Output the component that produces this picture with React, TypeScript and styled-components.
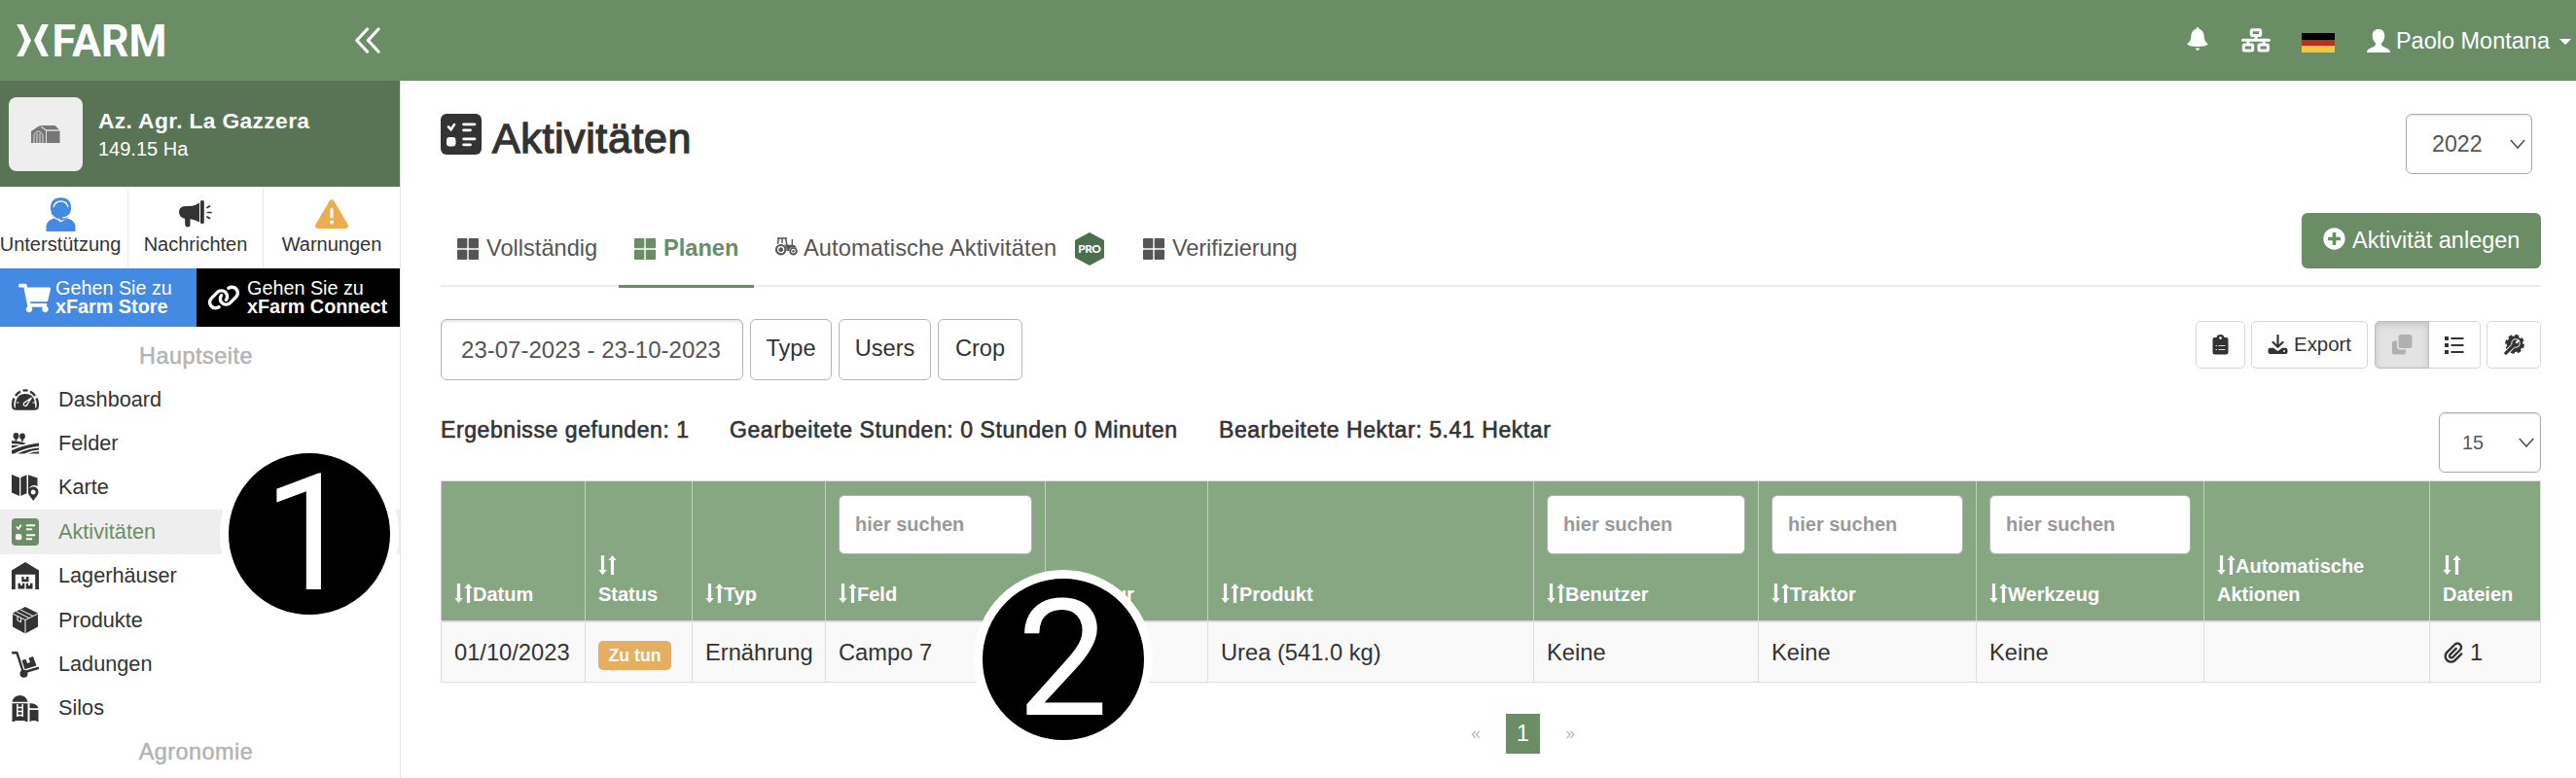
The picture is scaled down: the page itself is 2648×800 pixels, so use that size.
import React from "react";
import styled, { createGlobalStyle, css } from "styled-components";
import { FaPlusCircle, FaShoppingCart } from "react-icons/fa";
import { FaLink, FaPaperclip, FaTriangleExclamation } from "react-icons/fa6";

const green = "#6a8d66";
const ink = "#333";

const GlobalStyle = createGlobalStyle`
  *, *::before, *::after { box-sizing: border-box; }
  html, body { margin: 0; padding: 0; background: #fff; }
  body { font-family: "Liberation Sans", Arial, sans-serif; color: ${ink}; overflow: hidden; }
  svg { display: block; flex: none; }
  button, input { font-family: inherit; margin: 0; }
`;

const Page = styled.div`
  position: relative;
  display: flex;
  flex-direction: column;
  width: 2648px;
  height: 800px;
  overflow: hidden;
  background: #fff;
`;

/* ---------- top bar ---------- */

const TopBar = styled.header`
  display: flex;
  align-items: center;
  flex: none;
  height: 83px;
  padding: 0 5px 0 17px;
  background: ${green};
  color: #fff;
`;

const Collapse = styled.div`
  margin-left: 190px;
`;

const TopActions = styled.div`
  display: flex;
  align-items: center;
  margin-left: auto;
`;

const BellSlot = styled.div`margin: 0 34px 4px 0;`;
const NetSlot = styled.div`margin: 0 32px 0 0;`;

const Flag = styled.div`
  width: 34px;
  height: 20px;
  margin: 4px 33px 0 0;
  background: linear-gradient(#000 0 7px, #bb2f1c 7px 13.5px, #f2c744 13.5px);
`;

const UserName = styled.span`
  margin-left: 6px;
  font-size: 23.5px;
  line-height: 30px;
  white-space: nowrap;
`;

const Caret = styled.i`
  margin: 3px 0 0 10px;
  border: 6px solid transparent;
  border-top-color: #fff;
  border-bottom: 0;
`;

/* ---------- sidebar ---------- */

const Body = styled.div`
  display: flex;
  flex: 1;
  min-height: 0;
`;

const Sidebar = styled.aside`
  flex: none;
  width: 412px;
  border-right: 1px solid #e6e6e6;
  overflow: hidden;
`;

const Farm = styled.div`
  display: flex;
  align-items: center;
  height: 109px;
  padding-left: 9px;
  background: #587454;
  color: #fff;
`;

const Avatar = styled.div`
  display: flex;
  align-items: center;
  justify-content: center;
  width: 76px;
  height: 76px;
  margin-right: 16px;
  border-radius: 8px;
  background: #eee;
`;

const FarmName = styled.div`
  font-size: 22.8px;
  font-weight: 700;
  line-height: 31px;
  letter-spacing: 0.35px;
`;

const FarmArea = styled.div`
  font-size: 20px;
  line-height: 27px;
`;

const QuickLinks = styled.div`
  display: grid;
  grid-template-columns: 132px 139px 140px;
  height: 84px;
`;

const QuickLink = styled.div<{ $shift?: number }>`
  display: flex;
  flex-direction: column;
  align-items: center;
  border-right: 1px solid #eaeaea;
  padding-right: ${(p) => p.$shift ?? 0}px;
  &:last-child { border-right: 0; }
`;

const QuickIcon = styled.div`
  display: flex;
  align-items: center;
  justify-content: center;
  height: 36px;
  margin-top: 10px;
`;

const QuickLabel = styled.span`
  font-size: 20px;
  line-height: 26px;
  white-space: nowrap;
`;

const Promos = styled.div`
  display: flex;
  height: 60px;
`;

const Promo = styled.div<{ $bg: string; $w: number; $pad: number; $gap: number }>`
  display: flex;
  align-items: center;
  width: ${(p) => p.$w}px;
  padding-left: ${(p) => p.$pad}px;
  gap: ${(p) => p.$gap}px;
  background: ${(p) => p.$bg};
  color: #fff;
  font-size: 19.8px;
  line-height: 19.5px;
  white-space: nowrap;
  b { display: block; }
`;

const Section = styled.div<{ $top: number }>`
  height: 30px;
  margin-top: ${(p) => p.$top}px;
  padding-right: 8px;
  text-align: center;
  font-size: 23.4px;
  letter-spacing: 0.5px;
  line-height: 30px;
  color: #b3b3b3;
  -webkit-text-stroke: 0.5px #b3b3b3;
`;

const Menu = styled.nav`
  margin-top: 7px;
`;

const MenuItem = styled.div<{ $active?: boolean }>`
  display: flex;
  align-items: center;
  height: 45.4px;
  padding-left: 12px;
  gap: 20px;
  font-size: 21.7px;
  ${(p) => p.$active && css`background: #eee; color: ${green};`}
`;

/* ---------- main ---------- */

const Main = styled.main`
  flex: 1;
  min-width: 0;
  padding: 34px 36px 0 41px;
`;

const TitleRow = styled.div`
  display: flex;
  justify-content: space-between;
  height: 102px;
`;

const Title = styled.h1`
  display: flex;
  align-items: center;
  gap: 11px;
  height: 42px;
  margin: 0;
  font-size: 43px;
  font-weight: 400;
  line-height: 48px;
  letter-spacing: 0.6px;
  -webkit-text-stroke: 1.3px ${ink};
  span { padding-top: 7px; }
`;

const Select = styled.div<{ $w: number; $h: number; $size: number; $padL: number; $mr?: number }>`
  display: flex;
  align-items: center;
  justify-content: space-between;
  width: ${(p) => p.$w}px;
  height: ${(p) => p.$h}px;
  margin-right: ${(p) => p.$mr ?? 0}px;
  padding: 0 6px 0 ${(p) => p.$padL}px;
  border: 1.5px solid #aaa;
  border-radius: 6px;
  box-shadow: inset 0 1px 2px rgba(0, 0, 0, 0.1);
  font-size: ${(p) => p.$size}px;
  color: #555;
`;

const TabRow = styled.div`
  display: flex;
  justify-content: space-between;
  height: 76px;
  border-bottom: 2px solid #ececec;
`;

const Tabs = styled.div`
  display: flex;
  gap: 5px;
`;

const Tab = styled.div<{ $w: number; $active?: boolean }>`
  display: flex;
  align-items: center;
  width: ${(p) => p.$w}px;
  height: 77px;
  padding: 0 0 4px 17px;
  font-size: 23.6px;
  white-space: nowrap;
  color: #555;
  ${(p) => p.$active && css`
    padding-bottom: 1px;
    padding-left: 16px;
    border-bottom: 3px solid ${green};
    color: ${green};
    font-weight: 700;
  `}
`;

const TabLabel = styled.span<{ $gap?: number; $spread?: number }>`
  margin-left: ${(p) => p.$gap ?? 8}px;
  letter-spacing: ${(p) => p.$spread ?? 0}px;
`;

const ProSlot = styled.div`margin-left: 19px;`;
const TractorSlot = styled.div`margin-bottom: 5px;`;

const Primary = styled.button`
  display: flex;
  align-items: center;
  gap: 7px;
  width: 246px;
  height: 57px;
  padding: 0 0 0 22px;
  border: 0;
  border-radius: 6px;
  background: ${green};
  color: #fff;
  font-size: 23.5px;
  white-space: nowrap;
  svg { margin-bottom: 4px; }
`;

const ToolRow = styled.div`
  display: flex;
  justify-content: space-between;
  margin-top: 33px;
  height: 63px;
`;

const Filters = styled.div`
  display: flex;
  gap: 7px;
`;

const Filter = styled.div<{ $w: number; $date?: boolean }>`
  display: flex;
  align-items: center;
  justify-content: center;
  width: ${(p) => p.$w}px;
  height: 63px;
  padding-bottom: ${(p) => (p.$date ? 0 : 2)}px;
  padding-right: ${(p) => (p.$date ? 2 : 0)}px;
  border: 1.5px solid #b4b4b4;
  border-radius: 6px;
  font-size: ${(p) => (p.$date ? 24 : 23.6)}px;
  color: ${(p) => (p.$date ? "#555" : ink)};
  box-shadow: ${(p) => (p.$date ? "inset 0 2px 2px rgba(0,0,0,0.1)" : "none")};
`;

const Tools = styled.div`
  display: flex;
  margin-top: 2px;
`;

const Tool = styled.div<{ $w: number; $ml?: number; $pressed?: boolean; $side?: "l" | "r" }>`
  display: flex;
  align-items: center;
  justify-content: center;
  gap: 6px;
  width: ${(p) => p.$w}px;
  height: 49px;
  margin-left: ${(p) => p.$ml ?? 0}px;
  border: 1.5px solid #d6d6d6;
  border-radius: ${(p) => (p.$side === "l" ? "5px 0 0 5px" : p.$side === "r" ? "0 5px 5px 0" : "5px")};
  ${(p) => p.$side === "r" && "border-left: 0;"}
  font-size: 20.4px;
  ${(p) => p.$pressed && css`
    background: #e3e3e3;
    border-color: #bdbdbd;
    box-shadow: inset 0 3px 7px rgba(0, 0, 0, 0.14);
  `}
`;

const Summary = styled.div`
  display: flex;
  justify-content: space-between;
  height: 103px;
  padding-top: 33px;
`;

const Facts = styled.div`
  display: flex;
  padding-top: 4px;
  font-size: 23px;
  line-height: 28px;
  letter-spacing: 0.58px;
  -webkit-text-stroke: 0.6px ${ink};
  white-space: nowrap;
`;

const Fact = styled.span<{ $w: number }>`
  width: ${(p) => p.$w}px;
`;

const columnTracks = "148px 110px 137px 226px 167px 335px 231px 224px 234px 232px 114px";

const Table = styled.div`
  border: 1px solid #ddd;
  border-left: 0;
`;

const HeadRow = styled.div`
  display: grid;
  grid-template-columns: ${columnTracks};
  height: 145px;
  border-bottom: 2px solid #d9dcd9;
  background: #87a783;
  color: #fff;
`;

const HeadCell = styled.div`
  display: flex;
  flex-direction: column;
  justify-content: space-between;
  padding: 14px 13px 12px;
  border-left: 1px solid #c3d0c1;
  font-size: 20px;
  font-weight: 700;
  line-height: 29px;
`;

const Search = styled.input`
  width: 100%;
  height: 61px;
  padding: 0 16px;
  border: 1.5px solid #aab4a8;
  border-radius: 6px;
  background: #fff;
  font-size: 20px;
  font-weight: 700;
  &::placeholder { color: #999; opacity: 1; }
`;

const HeadLabel = styled.div`
  margin-top: auto;
  svg { display: inline-block; vertical-align: -2px; }
`;

const DataRow = styled.div`
  display: grid;
  grid-template-columns: ${columnTracks};
  height: 61px;
  background: #f9f9f9;
`;

const Cell = styled.div`
  display: flex;
  align-items: center;
  gap: 6px;
  padding: 1px 0 0 13px;
  border-left: 1px solid #ddd;
  font-size: 23.7px;
  white-space: nowrap;
`;

const Badge = styled.span`
  width: 75px;
  height: 30px;
  margin-top: 5px;
  border-radius: 5px;
  background: #e6ae60;
  color: #fff;
  font-size: 17.7px;
  font-weight: 700;
  line-height: 30px;
  text-align: center;
`;

const Pager = styled.div`
  display: flex;
  align-items: center;
  justify-content: center;
  height: 41px;
  margin-top: 32px;
  padding-left: 66px;
`;

const PageArrow = styled.span`
  width: 62px;
  text-align: center;
  font-size: 17.5px;
  color: #b9b9b9;
`;

const PageNumber = styled.span`
  width: 35px;
  height: 41px;
  background: ${green};
  color: #fff;
  font-size: 23px;
  line-height: 41px;
  text-align: center;
`;

/* Numbered step marker that floats over the screen. */
const Marker = styled.div<{ $x: number; $y: number }>`
  position: absolute;
  left: ${(p) => p.$x - 92}px;
  top: ${(p) => p.$y - 92}px;
  width: 184px;
  height: 184px;
  border: 9.5px solid #fff;
  border-radius: 50%;
  background: #000;
  color: #fff;
  font: 400 167px/166px Roboto, sans-serif;
  text-align: center;
`;

/* ---------- drawings ---------- */

const Logo = () => (
  <svg width="158" height="34" viewBox="0 0 158 34" fill="#fff">
    <path d="M0 0H7Q11 9 15 16.500Q11 25 7 33H0Q6 23 8 16.500Q6 10 0 0Z" />
    <path d="M33 0H26Q22 8 18 16.500Q22 25 26 33H33Q28 23 25 16.500Q28 10 33 0Z" />
    <text x="36.500" y="33" fontFamily="Roboto, sans-serif" fontWeight="700" fontSize="46" textLength="118" lengthAdjust="spacingAndGlyphs">FARM</text>
  </svg>
);

const Chevrons = () => (
  <svg width="27" height="27" viewBox="0 0 27 27" fill="none" stroke="#fff" strokeWidth="3.200" strokeLinecap="round" strokeLinejoin="round">
    <path d="M12.500 2L1.800 13.500L12.500 25M24 2L13.300 13.500L24 25" />
  </svg>
);

const Bell = () => (
  <svg width="22" height="24" viewBox="0 0 22 24" fill="#fff">
    <path d="M11 0c1 0 1.500.8 1.500 1.800 3.500 1 5 3.700 5.200 7.200.2 4 1 6 4.300 8.500-2 1.700-6 2.500-11 2.500s-9-.8-11-2.500C3.300 15 4.100 13 4.300 9c.2-3.500 1.700-6.200 5.200-7.200C9.500.8 10 0 11 0z" />
    <path d="M9 21.600h4c0 1.300-.9 2.200-2 2.200s-2-.9-2-2.200z" />
  </svg>
);

const Network = () => (
  <svg width="30" height="25" viewBox="0 0 30 25" fill="none" stroke="#fff" strokeWidth="3">
    <rect x="10.300" y="1.800" width="9.400" height="5.800" rx="1" />
    <path d="M1.500 12.300H28.500M15 8V12M7 12V16M23 12V16" strokeLinecap="round" />
    <rect x="2.300" y="17" width="9.400" height="6" rx="1" />
    <rect x="18" y="17" width="9.400" height="6" rx="1" />
  </svg>
);

const User = () => (
  <svg width="24" height="24" viewBox="0 0 24 24" fill="#fff">
    <path d="M12 0c4 0 6.300 2.700 6.300 6.500 0 3.400-1.400 6.300-3.300 7.800-.3 2 .4 3 2.500 3.900 3 1.300 6.300 2 6.500 5.800H0c.2-3.800 3.500-4.500 6.500-5.800 2.100-.9 2.800-1.900 2.500-3.900C7.100 12.800 5.700 9.900 5.700 6.500 5.700 2.700 8 0 12 0z" />
  </svg>
);

const Barn = () => (
  <svg width="30" height="18" viewBox="0 0 30 18">
    <path d="M0 6L7.500 1L10 0L15 5.500V18H0Z" fill="#777" />
    <path d="M10 0H24.500L29 4.500H15.500Z" fill="#777" />
    <path d="M16 5.500H29.500V18H16Z" fill="#777" />
    <path d="M10 1.200L15.500 5.200H29M15.500 5.200V18" stroke="#ddd" strokeWidth=".9" fill="none" />
    <path d="M3 18V9.500Q7.500 2.500 12 9.500V18M6 18V8M9 18V8" stroke="#ddd" strokeWidth="1" fill="none" />
  </svg>
);

const Support = () => (
  <svg width="31" height="35" viewBox="0 0 31 35">
    <path d="M0.500 35V30C.5 25 5 22.500 9 21.500L15.500 25.500L22 21.500C26 22.500 30.500 25 30.500 30V35Z" fill="#458ae2" />
    <ellipse cx="15.500" cy="12.500" rx="10.300" ry="11" fill="#458ae2" />
    <path d="M6 13Q5 1.300 15.500 1.300Q26 1.300 25 13" fill="none" stroke="#458ae2" strokeWidth="2" />
    <path d="M8 10Q9.500 4 15.500 4T23 10" fill="none" stroke="#fff" strokeWidth="1.300" />
    <path d="M6.500 18Q9 22.500 15 22.500M25 16.500Q23 20.800 17 21" fill="none" stroke="#fff" strokeWidth="1.200" />
  </svg>
);

const Megaphone = () => (
  <svg width="34" height="28" viewBox="0 0 34 28" fill={ink}>
    <path d="M21 2.500V22.500Q16 19.500 11.500 19.300V25.500Q11.500 27.500 9 27.500Q6.500 27.500 6.300 25.500L6 18.800Q0 17.500 0 12Q0 6.500 6.500 6H12Q17 5.500 21 2.500Z" />
    <rect x="22" y="0" width="3.800" height="24" rx="1.600" />
    <path d="M29 7.500L31.500 6M29.500 12.500H33M29 17L31.500 18.500" stroke={ink} strokeWidth="1.700" strokeLinecap="round" />
  </svg>
);

const Checklist = ({ size, color }: { size: number; color: string }) => (
  <svg width={size} height={size} viewBox="0 0 42 42">
    <rect width="42" height="42" rx="6" fill={color} />
    <path d="M8 13.500L10.500 16.200L14 11" fill="none" stroke="#fff" strokeWidth="2.600" strokeLinecap="round" />
    <rect x="6" y="24" width="9.500" height="9.500" rx="3.200" fill="#fff" />
    <path d="M23.500 10.800H35M23.500 16.800H30.500M23.500 25.800H35M23.500 31.800H30.500" stroke="#fff" strokeWidth="2.800" strokeLinecap="round" />
  </svg>
);

const Gauge = () => (
  <svg width="28" height="22" viewBox="0 0 28 22">
    <path d="M2 20.500Q0 15 2.500 9.500M4 7Q6 4 9 2.700M11.500 1.700Q14 1 16.500 1.700M19 2.700Q22 4 24 7M25.500 9.500Q28 15 26 20.500" fill="none" stroke={ink} strokeWidth="2.400" />
    <path d="M4 21.500Q2.500 5 14 5Q25.500 5 24 21.500Z" fill={ink} />
    <path d="M2 20.500H26" stroke={ink} strokeWidth="2" />
    <path d="M20.500 9L12.500 14.500Q11.500 17.500 14.500 17.500Q16 17 16.500 15Z" fill="none" stroke="#fff" strokeWidth="1.300" />
    <path d="M5 14H7.500M21.500 14H24" stroke="#fff" strokeWidth="1.200" />
  </svg>
);

const Field = () => (
  <svg width="28" height="22" viewBox="0 0 28 22" fill={ink}>
    <path d="M4.500 0C7 0 7.800 2 7.300 4.300C7 5.800 6 6.500 5.300 6.700V8.500H3.700V6.700C3 6.500 2 5.800 1.700 4.300C1.200 2 2 0 4.500 0ZM11 .5C13.500.5 14.300 2.500 13.800 4.500C13.500 6 12.500 6.700 11.800 6.900V9H10.200V6.900C9.500 6.700 8.500 6 8.200 4.500C7.700 2.500 8.500.5 11 .5Z" />
    <path d="M0 8.300Q6 7.800 15 11L11 12.200Q5 11 0 11.300ZM0 13Q4 12.300 8 13Q4 14.500 0 15.800Z" />
    <path d="M0 18Q12 12.500 28 10.500V13.800Q15 15 2.500 21.500H0ZM6 21.500Q16 16.500 28 15.500V17.500Q20 18 13 21.500ZM17 21.500Q22 19.500 28 19.200V21.500Z" />
  </svg>
);

const MapIcon = () => (
  <svg width="28" height="27" viewBox="0 0 28 27" fill={ink}>
    <path d="M0 0L8 3.200V22L0 18.500ZM9.300 3L15.500.3V19.300L9.300 22ZM17 .3L26.500 3.500V12Q22 9.500 18.500 13V19L17 19Z" />
    <path d="M22.200 12.500C25.500 12.500 27.500 15 27.500 17.800C27.500 21.500 24 24 22.200 27C20.500 24 17 21.500 17 17.800C17 15 19 12.500 22.200 12.500ZM22.200 15.500A2.500 2.500 0 1 0 22.200 20.500A2.500 2.500 0 1 0 22.200 15.500Z" fillRule="evenodd" />
  </svg>
);

const Warehouse = () => (
  <svg width="28" height="28" viewBox="0 0 28 28" fill={ink}>
    <path d="M0 8.500L14 0L28 8.500V28H24.200V12.800H3.800V28H0Z" />
    <path d="M10.300 15H12.500V17.500H15V15H17.500V20.300H10.300ZM6.500 21.800H9V24H11V21.800H13.300V27.500H6.500ZM14.800 21.800H17V24H19V21.800H21.500V27.500H14.800Z" />
  </svg>
);

const Box = () => (
  <svg width="28" height="28" viewBox="0 0 28 28">
    <path d="M14 0L27 6.500V20.500L14 27.500L1 20.500V6.500Z" fill={ink} />
    <path d="M1 7L14 13.500L27 7M14 13.500V27.500M5 5L18 11.500M9 3L22 9.500M6 9.500V14L9.500 15.800V11.500" fill="none" stroke="#fff" strokeWidth="1" />
  </svg>
);

const Trolley = () => (
  <svg width="28" height="27" viewBox="0 0 28 27">
    <path d="M1 1.300L5.500 1.300L12 21.500L27 17" fill="none" stroke={ink} strokeWidth="2.400" strokeLinecap="round" strokeLinejoin="round" />
    <circle cx="12.500" cy="22.800" r="4" fill={ink} />
    <path d="M10.500 9L14.500 7.800L16 12L19 11L17.500 6.500L22 5L25.500 14.500L13.500 18.200Z" fill={ink} />
  </svg>
);

const Silo = () => (
  <svg width="28" height="27" viewBox="0 0 28 27" fill={ink}>
    <path d="M.5 6.800Q2 0 8.500 0T16.500 6.800Z" />
    <path d="M.5 8.200H16.500V27H14.500L13 26H4L2.500 27H.5Z" />
    <path d="M5.800 9V22M11.200 9V22M5.800 12.500H11.200M5.800 16.500H11.200M5.800 20.500H11.200" stroke="#fff" strokeWidth="1.500" />
    <path d="M18.500 8.200Q26 8 27.500 13.300H18.500ZM18.500 15H27.500V27H26L25 26H20.500L19.500 27H18.500Z" />
  </svg>
);

const Tiles = () => (
  <svg width="22" height="22" viewBox="0 0 22 22" fill="currentColor">
    <rect width="10.300" height="10.300" rx="1" />
    <rect x="11.700" width="10.300" height="10.300" rx="1" />
    <rect y="11.700" width="10.300" height="10.300" rx="1" />
    <rect x="11.700" y="11.700" width="10.300" height="10.300" rx="1" />
  </svg>
);

const Tractor = () => (
  <svg width="23" height="19" viewBox="0 0 23 19" fill="none" stroke="#555">
    <path d="M2 1H12M3.500 1L2.500 7M10.500 1L12 8M7 1V6" strokeWidth="1.500" />
    <path d="M17.300 2V8" strokeWidth="1.300" />
    <path d="M9 7.500L20 8L22 11V14H11Z" fill="#555" stroke="none" />
    <circle cx="5.700" cy="12.700" r="6" fill="#fff" stroke="none" />
    <circle cx="5.700" cy="12.700" r="4.700" strokeWidth="2.100" />
    <circle cx="5.700" cy="12.700" r="1.900" fill="#555" />
    <circle cx="18.500" cy="14.200" r="4.500" fill="#fff" stroke="none" />
    <circle cx="18.500" cy="14.200" r="3.300" strokeWidth="1.900" />
    <circle cx="18.500" cy="14.200" r=".9" fill="#555" />
  </svg>
);

const Pro = () => (
  <svg width="30" height="34" viewBox="0 0 30 34">
    <path d="M15 0L30 8V26L15 34L0 26V8Z" fill="#4c704e" />
    <text x="15" y="21.200" textAnchor="middle" fontFamily="Lato, sans-serif" fontWeight="900" fontSize="11.800" textLength="23.500" fill="#fff">PRO</text>
  </svg>
);

const Down = () => (
  <svg width="16" height="11" viewBox="0 0 16 11" fill="none" stroke="#555" strokeWidth="1.700">
    <path d="M.8 1L8 9L15.200 1" />
  </svg>
);

const Clipboard = () => (
  <svg width="17" height="21" viewBox="0 0 17 21">
    <path d="M2.500 3H4.500Q5 0 8.500 0T12.500 3H14.500Q16.500 3 16.500 5V18.500Q16.500 20.500 14.500 20.500H2.500Q.5 20.500 .5 18.500V5Q.5 3 2.500 3Z" fill={ink} />
    <circle cx="8.500" cy="3.600" r="1.300" fill="#fff" />
    <path d="M3.500 11.500H5M6.500 11.500H13.500M3.500 15.500H5M6.500 15.500H13.500" stroke="#ddd" strokeWidth="1" />
  </svg>
);

const Download = () => (
  <svg width="21" height="21" viewBox="0 0 21 21">
    <path d="M10.500 1V12M5.500 8L10.500 12.700L15.500 8" fill="none" stroke={ink} strokeWidth="2.200" strokeLinecap="round" />
    <path d="M2.500 13.800H6L10.500 17L15 13.800H18.500Q20.500 13.800 20.500 16V18Q20.500 20 18.500 20H2.500Q.5 20 .5 18V16Q.5 13.800 2.500 13.800Z" fill={ink} />
    <circle cx="17" cy="17" r="1" fill="#fff" />
  </svg>
);

const Copies = () => (
  <svg width="21" height="21" viewBox="0 0 21 21" fill="#b0b0b0">
    <path d="M2.500 6.500H5V12.500Q5 15.500 8 15.500H14V18Q14 20.500 11.500 20.500H2.500Q0 20.500 0 18V9Q0 6.500 2.500 6.500Z" />
    <rect x="6.500" y="0" width="14" height="14" rx="2.500" />
  </svg>
);

const ListIcon = () => (
  <svg width="20" height="18" viewBox="0 0 20 18" stroke={ink}>
    <path d="M0 2H4M0 9H4M0 16H4" strokeWidth="3.800" />
    <path d="M6.500 2H19.500M6.500 9H19.500M6.500 16H19.500" strokeWidth="2.200" />
  </svg>
);

const GearWrench = () => (
  <svg width="21" height="21" viewBox="0 0 21 21">
    <circle cx="11" cy="9.800" r="8.300" fill={ink} />
    <circle cx="11" cy="9.800" r="8.700" fill="none" stroke={ink} strokeWidth="2.400" strokeDasharray="4 2.830" />
    <path d="M2 19L9 12" stroke="#fff" strokeWidth="5.200" />
    <circle cx="12" cy="9" r="4.700" fill="#fff" />
    <circle cx="12" cy="9" r="3.700" fill={ink} />
    <path d="M1.900 19.100L11 10" stroke={ink} strokeWidth="3.300" strokeLinecap="round" />
    <path d="M12.300 8.700L15.500 5.500" stroke="#fff" strokeWidth="2" />
  </svg>
);

const Sort = () => (
  <svg width="19" height="20" viewBox="0 0 19 20" fill="none" stroke="#fff" strokeWidth="3.200">
    <path d="M4.500 0V16M14.500 20V4" />
    <path d="M.3 15H8.700L4.500 20ZM10.300 5H18.700L14.500 0Z" fill="#fff" stroke="none" />
  </svg>
);

/* ---------- data ---------- */

const menu = [
  { label: "Dashboard", icon: <Gauge /> },
  { label: "Felder", icon: <Field /> },
  { label: "Karte", icon: <MapIcon /> },
  { label: "Aktivitäten", icon: <Checklist size={28} color={green} />, active: true },
  { label: "Lagerhäuser", icon: <Warehouse /> },
  { label: "Produkte", icon: <Box /> },
  { label: "Ladungen", icon: <Trolley /> },
  { label: "Silos", icon: <Silo /> },
];

const columns: { label: string; search?: boolean; wrap?: boolean; value: React.ReactNode }[] = [
  { label: "Datum", value: "01/10/2023" },
  { label: "Status", wrap: true, value: <Badge>Zu tun</Badge> },
  { label: "Typ", value: "Ernährung" },
  { label: "Feld", search: true, value: "Campo 7" },
  { label: "Kultur", value: "" },
  { label: "Produkt", value: "Urea (541.0 kg)" },
  { label: "Benutzer", search: true, value: "Keine" },
  { label: "Traktor", search: true, value: "Keine" },
  { label: "Werkzeug", search: true, value: "Keine" },
  { label: "Automatische Aktionen", value: "" },
  { label: "Dateien", wrap: true, value: <><FaPaperclip size={22} />1</> },
];

export default function App() {
  return (
    <Page>
      <GlobalStyle />
      <TopBar>
        <Logo />
        <Collapse><Chevrons /></Collapse>
        <TopActions>
          <BellSlot><Bell /></BellSlot>
          <NetSlot><Network /></NetSlot>
          <Flag />
          <User />
          <UserName>Paolo Montana</UserName>
          <Caret />
        </TopActions>
      </TopBar>
      <Body>
        <Sidebar>
          <Farm>
            <Avatar><Barn /></Avatar>
            <div>
              <FarmName>Az. Agr. La Gazzera</FarmName>
              <FarmArea>149.15 Ha</FarmArea>
            </div>
          </Farm>
          <QuickLinks>
            <QuickLink $shift={7}>
              <QuickIcon><Support /></QuickIcon>
              <QuickLabel>Unterstützung</QuickLabel>
            </QuickLink>
            <QuickLink>
              <QuickIcon><Megaphone /></QuickIcon>
              <QuickLabel>Nachrichten</QuickLabel>
            </QuickLink>
            <QuickLink>
              <QuickIcon><FaTriangleExclamation size={34} color="#ecac50" /></QuickIcon>
              <QuickLabel>Warnungen</QuickLabel>
            </QuickLink>
          </QuickLinks>
          <Promos>
            <Promo $bg="#458ae2" $w={202} $pad={19} $gap={5}>
              <FaShoppingCart size={33} />
              <div>Gehen Sie zu<b>xFarm Store</b></div>
            </Promo>
            <Promo $bg="#000" $w={209} $pad={11} $gap={7}>
              <FaLink size={34} />
              <div>Gehen Sie zu<b>xFarm Connect</b></div>
            </Promo>
          </Promos>
          <Section $top={15}>Hauptseite</Section>
          <Menu>
            {menu.map((m) => (
              <MenuItem key={m.label} $active={m.active}>
                {m.icon}
                <span>{m.label}</span>
              </MenuItem>
            ))}
          </Menu>
          <Section $top={7}>Agronomie</Section>
        </Sidebar>
        <Main>
          <TitleRow>
            <Title><Checklist size={42} color={ink} /><span>Aktivitäten</span></Title>
            <Select $w={130} $h={62} $size={23.2} $padL={26} $mr={9}>2022<Down /></Select>
          </TitleRow>
          <TabRow>
            <Tabs>
              <Tab $w={178}><Tiles /><TabLabel>Vollständig</TabLabel></Tab>
              <Tab $w={139} $active><Tiles /><TabLabel>Planen</TabLabel></Tab>
              <Tab $w={373}>
                <TractorSlot><Tractor /></TractorSlot>
                <TabLabel $gap={6} $spread={0.13}>Automatische Aktivitäten</TabLabel>
                <ProSlot><Pro /></ProSlot>
              </Tab>
              <Tab $w={180}><Tiles /><TabLabel $spread={-0.1}>Verifizierung</TabLabel></Tab>
            </Tabs>
            <Primary><FaPlusCircle size={23} />Aktivität anlegen</Primary>
          </TabRow>
          <ToolRow>
            <Filters>
              <Filter $w={311} $date>23-07-2023 - 23-10-2023</Filter>
              <Filter $w={84}>Type</Filter>
              <Filter $w={95}>Users</Filter>
              <Filter $w={87}>Crop</Filter>
            </Filters>
            <Tools>
              <Tool $w={51}><Clipboard /></Tool>
              <Tool $w={120} $ml={6}><Download />Export</Tool>
              <Tool $w={56} $ml={7} $pressed $side="l"><Copies /></Tool>
              <Tool $w={53} $side="r"><ListIcon /></Tool>
              <Tool $w={56} $ml={6}><GearWrench /></Tool>
            </Tools>
          </ToolRow>
          <Summary>
            <Facts>
              <Fact $w={297}>Ergebnisse gefunden: 1</Fact>
              <Fact $w={503}>Gearbeitete Stunden: 0 Stunden 0 Minuten</Fact>
              <Fact $w={345}>Bearbeitete Hektar: 5.41 Hektar</Fact>
            </Facts>
            <Select $w={105} $h={62} $size={19.8} $padL={23}>15<Down /></Select>
          </Summary>
          <Table>
            <HeadRow>
              {columns.map((c) => (
                <HeadCell key={c.label}>
                  {c.search && <Search placeholder="hier suchen" />}
                  <HeadLabel><Sort />{c.wrap && <br />}{c.label}</HeadLabel>
                </HeadCell>
              ))}
            </HeadRow>
            <DataRow>
              {columns.map((c) => <Cell key={c.label}>{c.value}</Cell>)}
            </DataRow>
          </Table>
          <Pager>
            <PageArrow>«</PageArrow>
            <PageNumber>1</PageNumber>
            <PageArrow>»</PageArrow>
          </Pager>
        </Main>
      </Body>
      <Marker $x={317.5} $y={549}>1</Marker>
      <Marker $x={1092.5} $y={678}>2</Marker>
    </Page>
  );
}
